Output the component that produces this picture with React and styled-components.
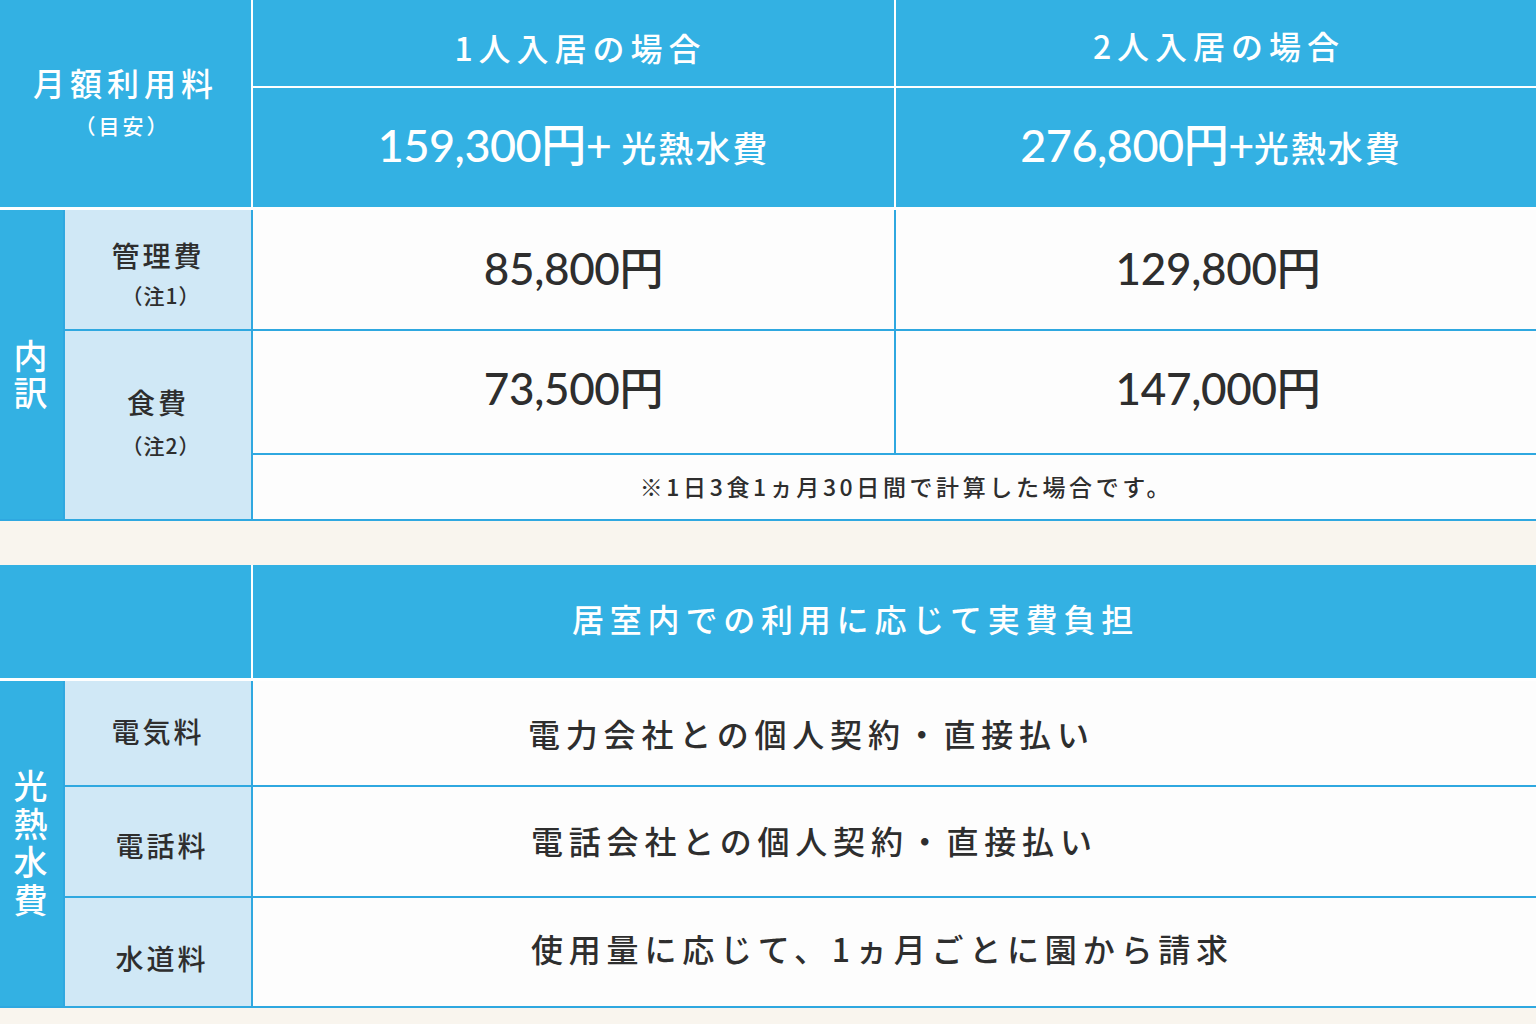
import React from "react";
import styled, { createGlobalStyle } from "styled-components";

const Global = createGlobalStyle`
  html, body { margin: 0; padding: 0; }
  body {
    background: #f9f5ee;
    font-family: "Noto Sans CJK JP", "Noto Sans", sans-serif;
    min-height: 100vh;
  }
`;

const BLUE = "#33b1e3";
const LINE = "#2fa8e0";
const LIGHT = "#d0e8f6";
const INK = "#2e2e2e";

const Page = styled.div`
  display: flex;
  flex-direction: column;
  width: 1536px;
`;

const Spacer = styled.div`
  height: ${(p) => p.$h}px;
`;

const Grid = styled.div`
  display: grid;
  grid-template-columns: 63px 186px 641px 1fr;
  grid-template-rows: ${(p) => p.$rows};
  gap: 2px;
  padding-bottom: ${(p) => p.$pb || 2}px;
  background: ${(p) => (p.$head ? "#ffffff" : LINE)};
`;

const Cell = styled.div`
  display: flex;
  flex-direction: column;
  align-items: center;
  justify-content: center;
  grid-column: ${(p) => p.$col || "auto"};
  grid-row: ${(p) => p.$row || "auto"};
  background: ${(p) =>
    p.$tone === "blue" ? BLUE : p.$tone === "light" ? LIGHT : "#fdfdfd"};
`;

const HeadTitle = styled.div`
  color: #fff;
  font-size: 32px;
  font-weight: 500;
  letter-spacing: ${(p) => p.$ls || 5}px;
  line-height: 1.2;
  margin-top: ${(p) => p.$mt || 0}px;
  margin-left: ${(p) => p.$ml || 0}px;
`;

const HeadSub = styled.div`
  color: #fff;
  font-size: 21px;
  font-weight: 500;
  letter-spacing: 3px;
  margin-top: 8px;
  margin-left: -6px;
`;

const Price = styled.div`
  color: #fff;
  font-family: "Lato", "Noto Sans CJK JP", sans-serif;
  font-size: 45px;
  font-weight: 500;
  letter-spacing: -0.5px;
  line-height: 1;
  white-space: pre;
  margin-top: -4px;
  margin-left: ${(p) => p.$ml || 0}px;

  span {
    font-family: "Noto Sans CJK JP", sans-serif;
    font-size: 35px;
    letter-spacing: 2px;
  }
`;

const Amount = styled.div`
  color: ${INK};
  font-family: "Lato", "Noto Sans CJK JP", sans-serif;
  font-size: 44px;
  font-weight: 500;
  letter-spacing: -0.3px;
  line-height: 1;
  margin-top: ${(p) => p.$mt || 0}px;
  margin-left: ${(p) => p.$ml || 0}px;
`;

const Vertical = styled.div`
  color: #fff;
  font-size: 34px;
  font-weight: 500;
  writing-mode: vertical-rl;
  text-orientation: upright;
  letter-spacing: ${(p) => p.$ls || 3}px;
  line-height: 1;
  margin-top: ${(p) => p.$mt || 0}px;
  margin-right: 3px;
`;

const Label = styled.div`
  color: ${INK};
  font-size: 28px;
  font-weight: 500;
  letter-spacing: 3px;
  line-height: 1.2;
  margin-top: ${(p) => p.$mt || 0}px;
  margin-left: ${(p) => p.$ml || 0}px;
`;

const LabelSub = styled.div`
  color: ${INK};
  font-size: 21px;
  font-weight: 500;
  letter-spacing: 1px;
  margin-top: ${(p) => p.$mt || 8}px;
  margin-left: ${(p) => p.$ml || 0}px;
`;

const Note = styled.div`
  color: ${INK};
  font-size: 23px;
  font-weight: 500;
  letter-spacing: 3.6px;
  margin-left: 24px;
  margin-top: -2px;
`;

const TextCell = styled(Cell)`
  align-items: flex-start;
  padding-left: ${(p) => p.$pl}px;
`;

const Sentence = styled.div`
  color: ${(p) => (p.$white ? "#fff" : INK)};
  font-size: 32px;
  font-weight: 500;
  letter-spacing: 5.8px;
  line-height: 1;
  margin-top: ${(p) => p.$mt || 0}px;
`;

export default function App() {
  return (
    <Page>
      <Global />
      <Grid $head $rows="86px 119px" $pb={3}>
        <Cell $tone="blue" $col="1 / 3" $row="1 / 3">
          <HeadTitle $mt={-4}>月額利用料</HeadTitle>
          <HeadSub>（目安）</HeadSub>
        </Cell>
        <Cell $tone="blue" $col="3" $row="1">
          <HeadTitle $mt={8} $ls={6} $ml={14}>1人入居の場合</HeadTitle>
        </Cell>
        <Cell $tone="blue" $col="4" $row="1">
          <HeadTitle $mt={4} $ls={6} $ml={6}>2人入居の場合</HeadTitle>
        </Cell>
        <Cell $tone="blue" $col="3" $row="2">
          <Price>
            159,300円+<span> 光熱水費</span>
          </Price>
        </Cell>
        <Cell $tone="blue" $col="4" $row="2">
          <Price $ml={-10}>
            276,800円+<span>光熱水費</span>
          </Price>
        </Cell>
      </Grid>
      <Grid $rows="119px 122px 64px" $pb={2}>
        <Cell $tone="blue" $col="1" $row="1 / 4">
          <Vertical $mt={22}>内訳</Vertical>
        </Cell>
        <Cell $tone="light" $col="2" $row="1">
          <Label $mt={10}>管理費</Label>
          <LabelSub $ml={6}>（注1）</LabelSub>
        </Cell>
        <Cell $col="3" $row="1">
          <Amount $mt={-4}>85,800円</Amount>
        </Cell>
        <Cell $col="4" $row="1">
          <Amount $mt={-4} $ml={4}>129,800円</Amount>
        </Cell>
        <Cell $tone="light" $col="2" $row="2 / 4">
          <Label $mt={-4}>食費</Label>
          <LabelSub $ml={6} $mt={10}>（注2）</LabelSub>
        </Cell>
        <Cell $col="3" $row="2">
          <Amount $mt={-8}>73,500円</Amount>
        </Cell>
        <Cell $col="4" $row="2">
          <Amount $mt={-8} $ml={4}>147,000円</Amount>
        </Cell>
        <Cell $col="3 / 5" $row="3">
          <Note>※1日3食1ヵ月30日間で計算した場合です。</Note>
        </Cell>
      </Grid>

      <Spacer $h={44} />

      <Grid $head $rows="113px" $pb={3}>
        <Cell $tone="blue" $col="1 / 3" $row="1" />
        <TextCell $tone="blue" $col="3 / 5" $row="1" $pl={319}>
          <Sentence $white $mt={-8}>居室内での利用に応じて実費負担</Sentence>
        </TextCell>
      </Grid>
      <Grid $rows="104px 109px 108px" $pb={2}>
        <Cell $tone="blue" $col="1" $row="1 / 4">
          <Vertical $mt={2} $ls={4}>光熱水費</Vertical>
        </Cell>
        <Cell $tone="light" $col="2" $row="1">
          <Label $mt={-2} $ml={0}>電気料</Label>
        </Cell>
        <TextCell $col="3 / 5" $row="1" $pl={275}>
          <Sentence $mt={0}>電力会社との個人契約・直接払い</Sentence>
        </TextCell>
        <Cell $tone="light" $col="2" $row="2">
          <Label $mt={8} $ml={8}>電話料</Label>
        </Cell>
        <TextCell $col="3 / 5" $row="2" $pl={278}>
          <Sentence $mt={-3}>電話会社との個人契約・直接払い</Sentence>
        </TextCell>
        <Cell $tone="light" $col="2" $row="3">
          <Label $mt={14} $ml={8}>水道料</Label>
        </Cell>
        <TextCell $col="3 / 5" $row="3" $pl={278}>
          <Sentence $mt={-8}>使用量に応じて、1ヵ月ごとに園から請求</Sentence>
        </TextCell>
      </Grid>
    </Page>
  );
}
